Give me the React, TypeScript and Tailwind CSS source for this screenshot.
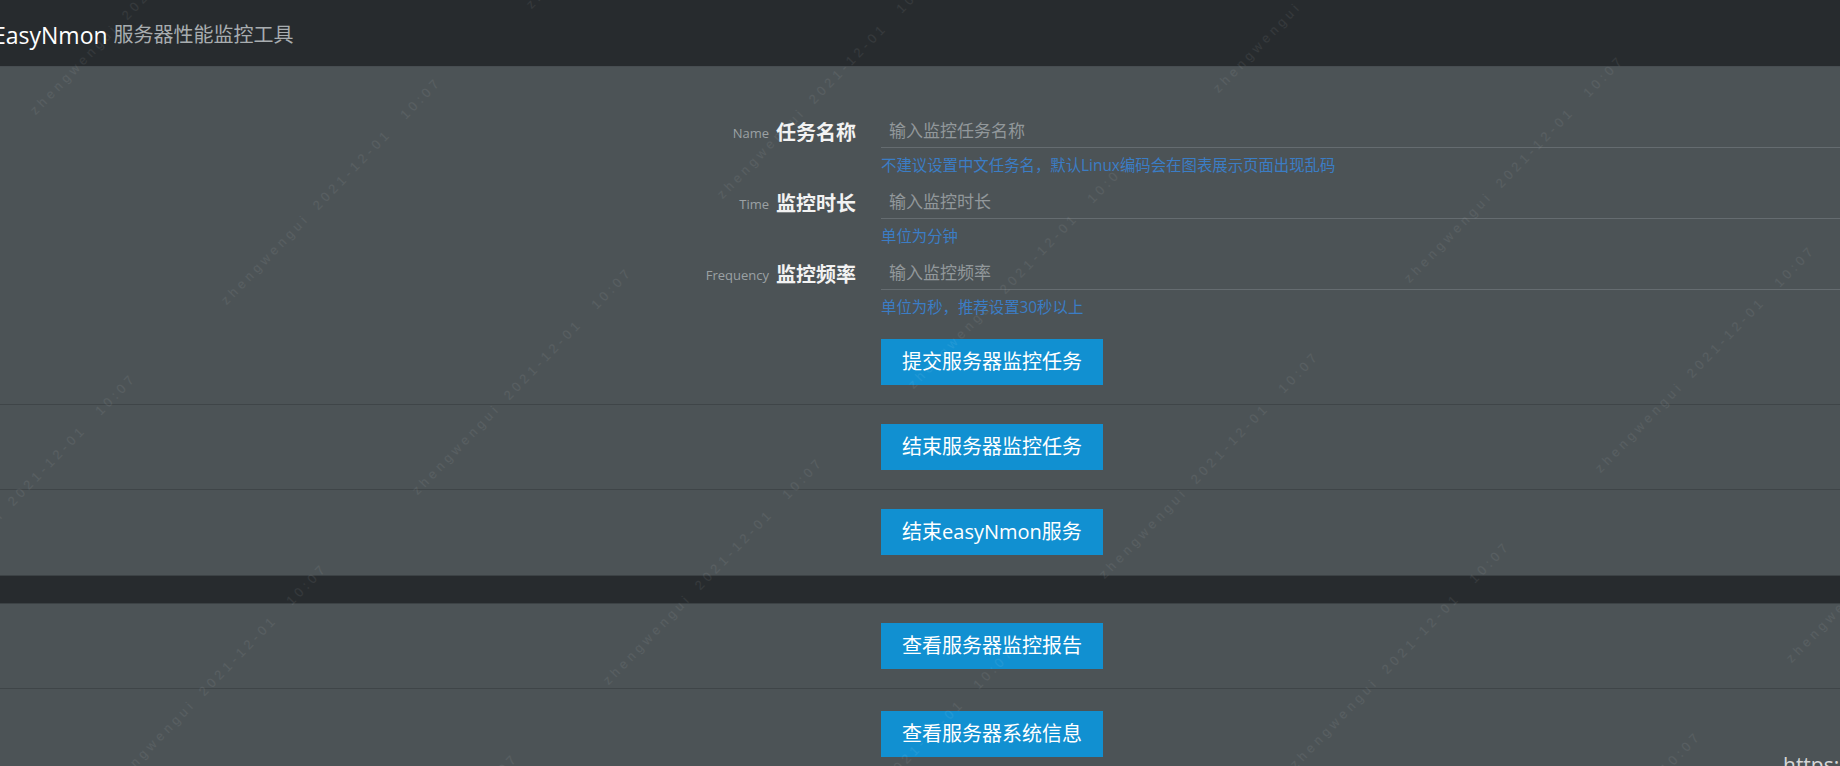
import React from "react";

const font = { fontFamily: '"Open Sans", "Noto Sans CJK SC", sans-serif' };

function Watermarks() {
  const marks: { x: number; y: number }[] = [];
  for (let i = -6; i < 8; i++) {
    for (let j = -3; j < 5; j++) {
      const x = 37 + i * 191 + j * 687;
      const y = 117 + i * 190 + j * 84;
      if (x > -400 && x < 1900 && y > -40 && y < 1100) marks.push({ x, y });
    }
  }
  return (
    <div className="pointer-events-none absolute inset-0 overflow-hidden">
      {marks.map((m, k) => (
        <div
          key={k}
          className="absolute flex h-[16px] origin-bottom-left -rotate-[46deg] items-end whitespace-nowrap text-[13px] leading-none tracking-[4px] text-white/[0.07]"
          style={{ left: m.x, top: m.y - 16, fontFamily: '"Liberation Sans", sans-serif' }}
        >
          <span className="w-[132px]">zhengwengui</span>
          <span className="w-[126px]">2021-12-01</span>
          <span>10:07</span>
        </div>
      ))}
    </div>
  );
}

function Field({ en, zh, placeholder, help }: { en: string; zh: string; placeholder: string; help: string }) {
  return (
    <div>
      <div className="flex h-[35px] gap-[25px]">
        <label className="mt-[5px] flex w-[856px] shrink-0 items-center justify-end gap-[7px] leading-none">
          <span className="text-[13px] text-[#9ba1a4]">{en}</span>
          <span className="text-[20px] font-bold text-[#f2f2f2]">{zh}</span>
        </label>
        <input
          className="h-[35px] flex-1 border-b border-[#656c70] bg-transparent px-[8px] text-[17px] text-white outline-none placeholder:text-[#92989b]"
          placeholder={placeholder}
        />
      </div>
      <div className="flex h-[36px] items-center pl-[881px] text-[15.4px] text-[#3b7dc5]">{help}</div>
    </div>
  );
}

function Btn({ children }: { children: React.ReactNode }) {
  return (
    <button className="flex h-[46px] w-[222px] items-center justify-center bg-[#1190d1] text-[20px] text-white">
      {children}
    </button>
  );
}

function BtnRow({ children, last }: { children: React.ReactNode; last?: boolean }) {
  return (
    <div className={"flex pb-[19px] pl-[881px] pt-[19px] " + (last ? "" : "border-b border-[#3f4548]")}>
      <Btn>{children}</Btn>
    </div>
  );
}

export default function App() {
  return (
    <div className="relative min-h-screen overflow-hidden bg-[#4c5356]" style={font}>
      <header className="flex h-[67px] items-center border-b border-[#474d51] bg-[#272b2e] pt-[4px]">
        <span className="ml-[-7px] text-[23px] text-white">EasyNmon</span>
        <span className="ml-[6px] text-[20px] text-[#a8adb0]">服务器性能监控工具</span>
      </header>

      <section className="border-b border-[#3f4548] pb-[19px] pt-[46px]">
        <Field en="Name" zh="任务名称" placeholder="输入监控任务名称" help="不建议设置中文任务名，默认Linux编码会在图表展示页面出现乱码" />
        <Field en="Time" zh="监控时长" placeholder="输入监控时长" help="单位为分钟" />
        <Field en="Frequency" zh="监控频率" placeholder="输入监控频率" help="单位为秒，推荐设置30秒以上" />
        <div className="mt-[13px] pl-[881px]">
          <Btn>提交服务器监控任务</Btn>
        </div>
      </section>

      <BtnRow>结束服务器监控任务</BtnRow>
      <div className="flex pb-[20px] pl-[881px] pt-[19px]">
        <Btn>结束easyNmon服务</Btn>
      </div>

      <div className="h-[29px] border-y border-[#3c4245] bg-[#272b2e]" />

      <BtnRow>查看服务器监控报告</BtnRow>
      <div className="flex pb-[19px] pl-[881px] pt-[22px]">
        <Btn>查看服务器系统信息</Btn>
      </div>

      <Watermarks />

      <div className="absolute left-[1783px] top-[755px] text-[21px] leading-none text-[#d6d6d6]">https://</div>
    </div>
  );
}
